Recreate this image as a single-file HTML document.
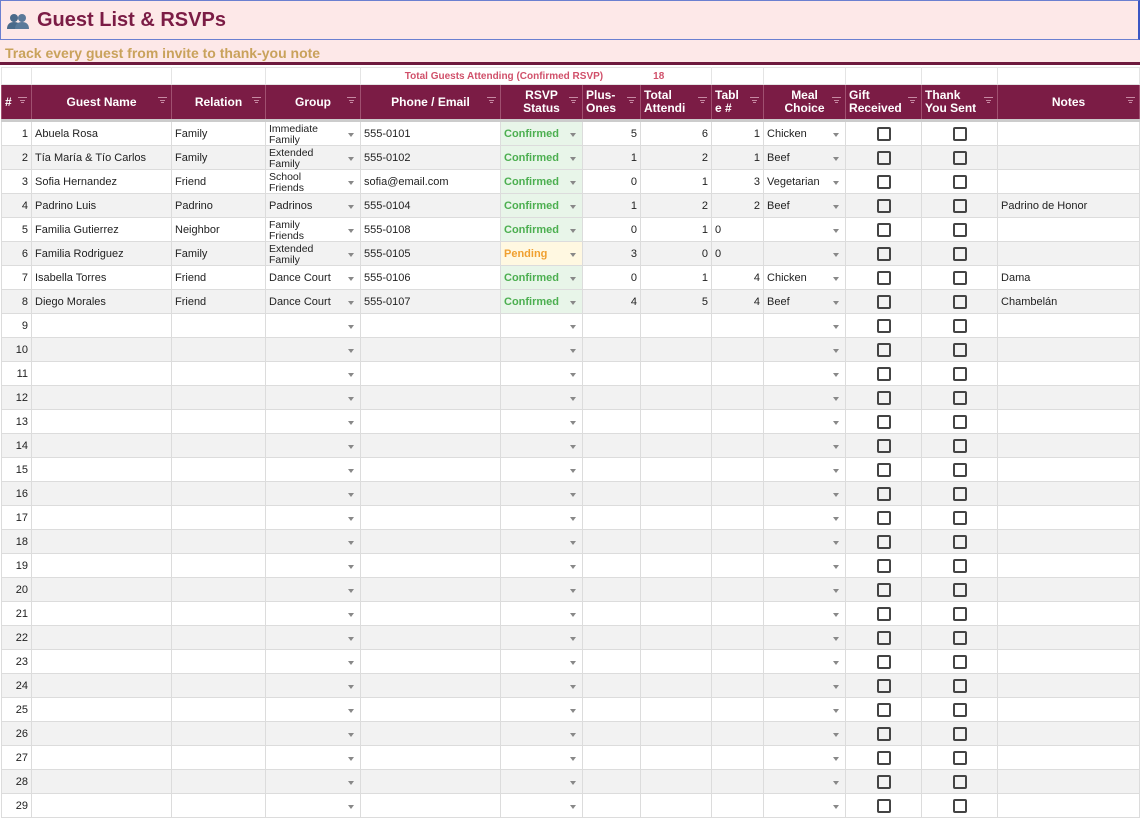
<!DOCTYPE html>
<html><head><meta charset="utf-8"><style>
*{box-sizing:border-box;margin:0;padding:0}
body{width:1140px;height:818px;overflow:hidden;background:#fff;font-family:"Liberation Sans",Arial,sans-serif;font-size:11px;color:#222;position:relative}
.title{position:absolute;left:0;top:0;width:1140px;height:40px;background:#fde8e8;border:1px solid #6b7fd0;border-right:2px solid #3a56c4}
.title h1{position:absolute;left:36px;top:8px;font-size:20px;color:#7b1c45;font-weight:bold}
.title .ic{position:absolute;left:6px;top:12px;width:22px;height:16px}
.sub{position:absolute;left:0;top:40px;width:1140px;height:25px;background:#fde8e8;border-bottom:3px solid #6e1a3e}
.sub span{position:absolute;left:5px;top:5px;font-size:14px;font-weight:bold;color:#c9a25b}
table{position:absolute;left:1px;top:67px;border-collapse:collapse;table-layout:fixed;width:1138px}
td{border:1px solid #dcdcdc;height:24px;padding:0 3px;white-space:nowrap;overflow:hidden;position:relative;vertical-align:middle}
tr.tot td{height:17px;font-size:10px;font-weight:bold;color:#d0506a;border-color:#e4e4e4}
tr.hd td{height:36px;background:#7b1c45;color:#fff;font-weight:bold;font-size:12px;text-align:center;line-height:13px;border-color:#a05070;border-bottom:3px solid #ccc}
tr.hd td i{position:absolute;right:4px;top:12px;width:9px;height:7px;border-top:1px solid #c78aa3}
tr.hd td i:before{content:"";position:absolute;left:2px;top:2px;width:5px;border-top:1px solid #c78aa3}
tr.hd td i:after{content:"";position:absolute;left:3px;top:4px;width:3px;border-top:1px solid #c78aa3}
tr:nth-child(2n+4) td{background:#f2f2f2}
td.n{text-align:right}
td.dd:after{content:"";position:absolute;right:6px;top:11px;border-left:3px solid transparent;border-right:3px solid transparent;border-top:4px solid #888}
td.rs{background:#e8f5e9!important;color:#4caf50;font-weight:bold}
td.pe{background:#fff8e1!important;color:#f0a030;font-weight:bold}
td.g2{font-size:10.5px;line-height:11px;padding-top:2px;vertical-align:top;height:24px}
td.g2 div{height:21px;overflow:hidden}
td.cb:before{content:"";position:absolute;left:50%;top:5px;margin-left:-7px;width:14px;height:14px;border:2px solid #444;border-radius:2px;box-sizing:border-box}
</style></head><body>
<div class="title"><svg class="ic" viewBox="0 0 22 16"><circle cx="7" cy="5" r="4" fill="#4a6a8a"/><path d="M0 16c0-5 3-7 7-7s7 2 7 7z" fill="#4a6a8a"/><circle cx="15" cy="5" r="4" fill="#5a7a9a"/><path d="M8 16c0-5 3-7 7-7s7 2 7 7z" fill="#5a7a9a"/></svg><h1>Guest List &amp; RSVPs</h1></div>
<div class="sub"><span>Track every guest from invite to thank-you note</span></div>
<table>
<colgroup><col style="width:30px"><col style="width:140px"><col style="width:94px"><col style="width:95px"><col style="width:140px"><col style="width:82px"><col style="width:58px"><col style="width:71px"><col style="width:52px"><col style="width:82px"><col style="width:76px"><col style="width:76px"><col style="width:142px"></colgroup>
<tr class="tot"><td></td><td></td><td></td><td></td><td colspan="4" style="text-align:center;padding-left:0">Total Guests Attending (Confirmed RSVP)&nbsp;&nbsp;&nbsp;&nbsp;&nbsp;&nbsp;&nbsp;&nbsp;&nbsp;&nbsp;&nbsp;&nbsp;&nbsp;&nbsp;&nbsp;&nbsp;&nbsp;&nbsp;18</td><td></td><td></td><td></td><td></td><td></td></tr>
<tr class="hd"><td style="text-align:left">#<i></i></td><td>Guest Name<i></i></td><td>Relation<i></i></td><td>Group<i></i></td><td>Phone / Email<i></i></td><td>RSVP<br>Status<i></i></td><td style="text-align:left">Plus-<br>Ones<i></i></td><td style="text-align:left">Total<br>Attendi<i></i></td><td style="text-align:left">Tabl<br>e #<i></i></td><td>Meal<br>Choice<i></i></td><td style="text-align:left">Gift<br>Received<i></i></td><td style="text-align:left">Thank<br>You Sent<i></i></td><td>Notes<i></i></td></tr>
<tr><td class="n">1</td><td>Abuela Rosa</td><td>Family</td><td class="dd g2"><div>Immediate<br>Family</div></td><td>555-0101</td><td class="dd rs">Confirmed</td><td class="n">5</td><td class="n">6</td><td class="n">1</td><td class="dd">Chicken</td><td class="cb"></td><td class="cb"></td><td></td></tr>
<tr><td class="n">2</td><td>Tía María &amp; Tío Carlos</td><td>Family</td><td class="dd g2"><div>Extended<br>Family</div></td><td>555-0102</td><td class="dd rs">Confirmed</td><td class="n">1</td><td class="n">2</td><td class="n">1</td><td class="dd">Beef</td><td class="cb"></td><td class="cb"></td><td></td></tr>
<tr><td class="n">3</td><td>Sofia Hernandez</td><td>Friend</td><td class="dd g2"><div>School<br>Friends</div></td><td>sofia@email.com</td><td class="dd rs">Confirmed</td><td class="n">0</td><td class="n">1</td><td class="n">3</td><td class="dd">Vegetarian</td><td class="cb"></td><td class="cb"></td><td></td></tr>
<tr><td class="n">4</td><td>Padrino Luis</td><td>Padrino</td><td class="dd">Padrinos</td><td>555-0104</td><td class="dd rs">Confirmed</td><td class="n">1</td><td class="n">2</td><td class="n">2</td><td class="dd">Beef</td><td class="cb"></td><td class="cb"></td><td>Padrino de Honor</td></tr>
<tr><td class="n">5</td><td>Familia Gutierrez</td><td>Neighbor</td><td class="dd g2"><div>Family<br>Friends</div></td><td>555-0108</td><td class="dd rs">Confirmed</td><td class="n">0</td><td class="n">1</td><td>0</td><td class="dd"></td><td class="cb"></td><td class="cb"></td><td></td></tr>
<tr><td class="n">6</td><td>Familia Rodriguez</td><td>Family</td><td class="dd g2"><div>Extended<br>Family</div></td><td>555-0105</td><td class="dd pe">Pending</td><td class="n">3</td><td class="n">0</td><td>0</td><td class="dd"></td><td class="cb"></td><td class="cb"></td><td></td></tr>
<tr><td class="n">7</td><td>Isabella Torres</td><td>Friend</td><td class="dd">Dance Court</td><td>555-0106</td><td class="dd rs">Confirmed</td><td class="n">0</td><td class="n">1</td><td class="n">4</td><td class="dd">Chicken</td><td class="cb"></td><td class="cb"></td><td>Dama</td></tr>
<tr><td class="n">8</td><td>Diego Morales</td><td>Friend</td><td class="dd">Dance Court</td><td>555-0107</td><td class="dd rs">Confirmed</td><td class="n">4</td><td class="n">5</td><td class="n">4</td><td class="dd">Beef</td><td class="cb"></td><td class="cb"></td><td>Chambelán</td></tr>
<tr><td class="n">9</td><td></td><td></td><td class="dd"></td><td></td><td class="dd"></td><td></td><td></td><td></td><td class="dd"></td><td class="cb"></td><td class="cb"></td><td></td></tr>
<tr><td class="n">10</td><td></td><td></td><td class="dd"></td><td></td><td class="dd"></td><td></td><td></td><td></td><td class="dd"></td><td class="cb"></td><td class="cb"></td><td></td></tr>
<tr><td class="n">11</td><td></td><td></td><td class="dd"></td><td></td><td class="dd"></td><td></td><td></td><td></td><td class="dd"></td><td class="cb"></td><td class="cb"></td><td></td></tr>
<tr><td class="n">12</td><td></td><td></td><td class="dd"></td><td></td><td class="dd"></td><td></td><td></td><td></td><td class="dd"></td><td class="cb"></td><td class="cb"></td><td></td></tr>
<tr><td class="n">13</td><td></td><td></td><td class="dd"></td><td></td><td class="dd"></td><td></td><td></td><td></td><td class="dd"></td><td class="cb"></td><td class="cb"></td><td></td></tr>
<tr><td class="n">14</td><td></td><td></td><td class="dd"></td><td></td><td class="dd"></td><td></td><td></td><td></td><td class="dd"></td><td class="cb"></td><td class="cb"></td><td></td></tr>
<tr><td class="n">15</td><td></td><td></td><td class="dd"></td><td></td><td class="dd"></td><td></td><td></td><td></td><td class="dd"></td><td class="cb"></td><td class="cb"></td><td></td></tr>
<tr><td class="n">16</td><td></td><td></td><td class="dd"></td><td></td><td class="dd"></td><td></td><td></td><td></td><td class="dd"></td><td class="cb"></td><td class="cb"></td><td></td></tr>
<tr><td class="n">17</td><td></td><td></td><td class="dd"></td><td></td><td class="dd"></td><td></td><td></td><td></td><td class="dd"></td><td class="cb"></td><td class="cb"></td><td></td></tr>
<tr><td class="n">18</td><td></td><td></td><td class="dd"></td><td></td><td class="dd"></td><td></td><td></td><td></td><td class="dd"></td><td class="cb"></td><td class="cb"></td><td></td></tr>
<tr><td class="n">19</td><td></td><td></td><td class="dd"></td><td></td><td class="dd"></td><td></td><td></td><td></td><td class="dd"></td><td class="cb"></td><td class="cb"></td><td></td></tr>
<tr><td class="n">20</td><td></td><td></td><td class="dd"></td><td></td><td class="dd"></td><td></td><td></td><td></td><td class="dd"></td><td class="cb"></td><td class="cb"></td><td></td></tr>
<tr><td class="n">21</td><td></td><td></td><td class="dd"></td><td></td><td class="dd"></td><td></td><td></td><td></td><td class="dd"></td><td class="cb"></td><td class="cb"></td><td></td></tr>
<tr><td class="n">22</td><td></td><td></td><td class="dd"></td><td></td><td class="dd"></td><td></td><td></td><td></td><td class="dd"></td><td class="cb"></td><td class="cb"></td><td></td></tr>
<tr><td class="n">23</td><td></td><td></td><td class="dd"></td><td></td><td class="dd"></td><td></td><td></td><td></td><td class="dd"></td><td class="cb"></td><td class="cb"></td><td></td></tr>
<tr><td class="n">24</td><td></td><td></td><td class="dd"></td><td></td><td class="dd"></td><td></td><td></td><td></td><td class="dd"></td><td class="cb"></td><td class="cb"></td><td></td></tr>
<tr><td class="n">25</td><td></td><td></td><td class="dd"></td><td></td><td class="dd"></td><td></td><td></td><td></td><td class="dd"></td><td class="cb"></td><td class="cb"></td><td></td></tr>
<tr><td class="n">26</td><td></td><td></td><td class="dd"></td><td></td><td class="dd"></td><td></td><td></td><td></td><td class="dd"></td><td class="cb"></td><td class="cb"></td><td></td></tr>
<tr><td class="n">27</td><td></td><td></td><td class="dd"></td><td></td><td class="dd"></td><td></td><td></td><td></td><td class="dd"></td><td class="cb"></td><td class="cb"></td><td></td></tr>
<tr><td class="n">28</td><td></td><td></td><td class="dd"></td><td></td><td class="dd"></td><td></td><td></td><td></td><td class="dd"></td><td class="cb"></td><td class="cb"></td><td></td></tr>
<tr><td class="n">29</td><td></td><td></td><td class="dd"></td><td></td><td class="dd"></td><td></td><td></td><td></td><td class="dd"></td><td class="cb"></td><td class="cb"></td><td></td></tr>
</table>
</body></html>
